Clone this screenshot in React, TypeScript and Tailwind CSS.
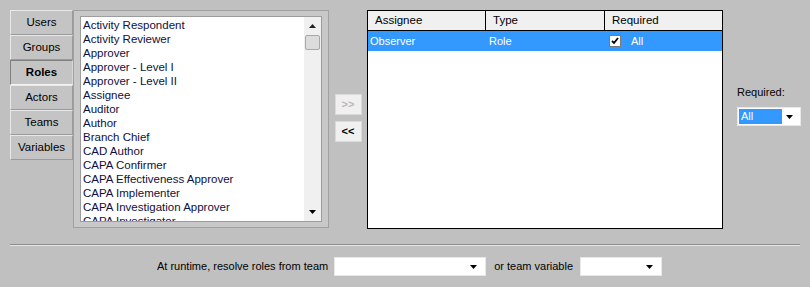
import React from "react";

const tabs = ["Users", "Groups", "Roles", "Actors", "Teams", "Variables"];

const roles = [
  "Activity Respondent",
  "Activity Reviewer",
  "Approver",
  "Approver - Level I",
  "Approver - Level II",
  "Assignee",
  "Auditor",
  "Author",
  "Branch Chief",
  "CAD Author",
  "CAPA Confirmer",
  "CAPA Effectiveness Approver",
  "CAPA Implementer",
  "CAPA Investigation Approver",
  "CAPA Investigator",
];

function Arrow() {
  return (
    <svg width="7" height="4" viewBox="0 0 7 4">
      <path d="M0 0h7L3.5 4z" fill="#000" />
    </svg>
  );
}

function Select({ width }: { width: string }) {
  return (
    <div className={`${width} h-[19px] bg-white border border-[#e8e8e8] flex items-center justify-end pr-[8px]`}>
      <Arrow />
    </div>
  );
}

export default function App() {
  return (
    <div className="w-[810px] h-[287px] bg-[#c0c0c0] pt-[10px] text-black overflow-hidden" style={{ fontFamily: '"Liberation Sans", Arial, sans-serif' }}>
      <div className="flex h-[220px]">
        {/* tabs */}
        <div className="ml-[10px] w-[63px] flex flex-col">
          {tabs.map((t) => (
            <div
              key={t}
              className={
                t === "Roles"
                  ? "h-[25px] flex items-center justify-center text-[11.5px] font-bold bg-[#c4c4c4] border-t border-l border-t-[#808080] border-l-[#808080] border-b border-b-[#f4f4f4] border-r border-r-[#d8d8d8]"
                  : "h-[25px] flex items-center justify-center text-[11.5px] bg-[#c4c4c4] border-t border-l border-t-[#e8e8e8] border-l-[#e8e8e8] border-b border-r border-b-[#9a9a9a] border-r-[#9a9a9a]"
              }
            >
              {t}
            </div>
          ))}
        </div>

        {/* list panel */}
        <div className="w-[256px] h-[218px] border border-[#a0a0a0] bg-[#c8c8c8] p-[5px] pl-[6px]">
          <div className="w-[242px] h-[206px] bg-white border border-[#9c9c9c] flex overflow-hidden">
            <div className="flex-1 pt-[1px] pl-[2px] overflow-hidden">
              {roles.map((r) => (
                <div key={r} className="h-[14px] leading-[14px] text-[11.5px] text-[#101040] whitespace-nowrap">
                  {r}
                </div>
              ))}
            </div>
            <div className="w-[17px] bg-[#f0f0f0] flex flex-col items-center">
              <div className="h-[18px] flex items-center justify-center">
                <svg width="7" height="4" viewBox="0 0 7 4">
                  <path d="M3.5 0L7 4H0z" fill="#222" />
                </svg>
              </div>
              <div className="w-[15px] h-[15px] bg-[#dcdcdc] border border-[#a8a8a8] rounded-[2px]" />
              <div className="flex-1" />
              <div className="h-[18px] flex items-center justify-center">
                <Arrow />
              </div>
            </div>
          </div>
        </div>

        {/* move buttons */}
        <div className="w-[38px] flex flex-col items-center pt-[84px] gap-[6px]">
          <div className="w-[27px] h-[21px] bg-[#f0f0f0] border border-[#dadada] flex items-center justify-center text-[11px] font-bold text-[#b8b8b8]">
            &gt;&gt;
          </div>
          <div className="w-[27px] h-[21px] bg-[#f0f0f0] border border-[#dadada] flex items-center justify-center text-[11px] font-bold text-black">
            &lt;&lt;
          </div>
        </div>

        {/* assignee table */}
        <div className="w-[356px] h-[219px] border border-black bg-white flex flex-col">
          <div className="h-[20px] flex bg-[#f0f0f0] border-b border-black text-[11.5px]">
            <div className="w-[118px] border-r border-black pl-[7px] flex items-center">Assignee</div>
            <div className="w-[119px] border-r border-black pl-[7px] flex items-center">Type</div>
            <div className="flex-1 pl-[7px] flex items-center">Required</div>
          </div>
          <div className="h-[20px] flex bg-[#3399ff] text-white text-[11px] items-center">
            <div className="w-[119px] pl-[2px]">Observer</div>
            <div className="w-[121px] pl-[2px]">Role</div>
            <div className="flex items-center gap-[10px] pl-[1px]">
              <div className="w-[12px] h-[12px] bg-white border border-[#7a7a7a] flex items-center justify-center">
                <svg width="8" height="8" viewBox="0 0 8 8">
                  <path d="M1 4l2 2 4-5" stroke="#000" strokeWidth="1.8" fill="none" />
                </svg>
              </div>
              <span>All</span>
            </div>
          </div>
        </div>

        {/* required */}
        <div className="pl-[14px] pt-[75px] flex flex-col">
          <div className="text-[11px] leading-[14px]">Required:</div>
          <div className="mt-[8px] w-[64px] h-[19px] bg-white border border-[#e8e8e8] flex items-center pl-[1px] pr-[7px]">
            <div className="w-[43px] h-[15px] bg-[#3399ff] border border-dotted border-[#c08000] text-white text-[11px] leading-[13px] pl-[1px]">
              All
            </div>
            <div className="flex-1 flex justify-end">
              <Arrow />
            </div>
          </div>
        </div>
      </div>

      {/* separator */}
      <div className="mt-[14px] mx-[10px] h-[2px] border-t border-[#8c8c8c] border-b border-b-[#e6e6e6]" />

      {/* bottom row */}
      <div className="mt-[11px] flex items-center pl-[157px] text-[11px]">
        <span>At runtime, resolve roles from team</span>
        <div className="ml-[6px]">
          <Select width="w-[152px]" />
        </div>
        <span className="ml-[8px]">or team variable</span>
        <div className="ml-[7px]">
          <Select width="w-[82px]" />
        </div>
      </div>
    </div>
  );
}
